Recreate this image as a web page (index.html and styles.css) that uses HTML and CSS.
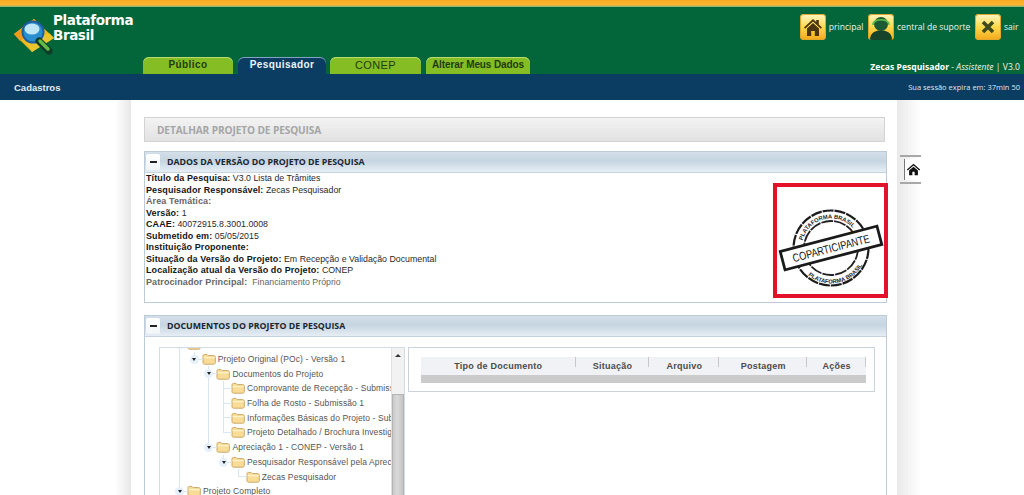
FILE: index.html
```html
<!DOCTYPE html>
<html lang="pt-BR">
<head>
<meta charset="utf-8">
<title>Plataforma Brasil</title>
<link rel="stylesheet" href="styles.css">
</head>
<body>
<svg class="defs" width="0" height="0" aria-hidden="true">
  <symbol id="folder" viewBox="0 0 14 12">
    <path d="M1 3.2C1 2 1.6 1.4 2.6 1.4H5L6.2 2.6H11.6C12.6 2.6 13.3 3.2 13.3 4.2V9.6C13.3 10.6 12.6 11.2 11.6 11.2H2.6C1.6 11.2 1 10.6 1 9.6Z" fill="#f9dd96" stroke="#c9a86a" stroke-width="1"/>
    <path d="M1.6 4.6H12.8" stroke="#fdf1c9" stroke-width="1.4"/>
  </symbol>
</svg>

<header class="masthead">
  <div class="stripe"></div>
  <div class="green">
    <div class="green-top">
      <a class="brand">
        <svg class="brand-mark" width="42" height="38" viewBox="0 0 42 38">
          <path d="M1 17 21 2 41 21 19 35Z" fill="#f4b81c"/>
          <path d="M1 17 21 2 26 7 7 24Z" fill="#f09a1e"/>
          <path d="M14 26 19 35 41 21 36 16Z" fill="#e9c62d"/>
          <circle cx="20" cy="15" r="10.5" fill="#2a8fd0" stroke="#1f5f9f" stroke-width="2"/>
          <ellipse cx="19" cy="12" rx="7.5" ry="5.5" fill="#bfe6f5"/>
          <path d="M26 24 36 34" stroke="#0d3d2a" stroke-width="7" stroke-linecap="round"/>
          <path d="M27 24 35 32" stroke="#63bb45" stroke-width="3.5" stroke-linecap="round"/>
        </svg>
        <span class="brand-name">Plataforma<br>Brasil</span>
      </a>
      <nav class="quick">
        <a class="quick-item">
          <span class="quick-icon">
            <svg width="20" height="20" viewBox="0 0 20 20"><path d="M1 10.5 10 2l3.2 3V3h2.6v4.5L19 10.5l-1.2 1.3L10 4.6 2.2 11.8Z" fill="#4a3412"/><path d="M4 11.5 10 6l6 5.500V19H11.800v-5H8.200v5H4Z" fill="#4a3412"/></svg>
          </span>principal</a>
        <a class="quick-item">
          <span class="quick-icon">
            <svg width="26" height="26" viewBox="0 0 26 26"><circle cx="13" cy="10" r="7" fill="#1c5a34"/><path d="M5 11C4.500 4 21.500 4 21 11" fill="none" stroke="#5fbf4a" stroke-width="1.600"/><path d="M2 26C2 18 8 16.500 13 16.500S24 18 24 26Z" fill="#17432a"/></svg>
          </span>central de suporte</a>
        <a class="quick-item">
          <span class="quick-icon">
            <svg width="14" height="14" viewBox="0 0 14 14"><path d="M2 2 12 12M12 2 2 12" stroke="#3f4a1c" stroke-width="3.600"/></svg>
          </span>sair</a>
      </nav>
    </div>
    <div class="green-bottom">
      <div class="tabs">
        <a class="tab tab-a">Público</a>
        <a class="tab tab-b is-active">Pesquisador</a>
        <a class="tab tab-c tab-light">CONEP</a>
        <a class="tab tab-d tab-small">Alterar Meus Dados</a>
      </div>
      <div class="user"><b>Zecas Pesquisador</b> - <i>Assistente</i> | V3.0</div>
    </div>
  </div>
  <div class="navy">
    <a class="menu-item">Cadastros</a>
    <span class="session">Sua sessão expira em: 37min 50</span>
  </div>
</header>

<div class="page">
  <div class="gutter-left"></div>
  <main class="sheet">
    <h1 class="page-title">DETALHAR PROJETO DE PESQUISA</h1>

    <section class="panel panel-data">
      <div class="panel-head"><span class="toggle-box"></span><h2>DADOS DA VERSÃO DO PROJETO DE PESQUISA</h2></div>
      <div class="data-body">
        <div class="facts">
          <div><b>Título da Pesquisa:</b> V3.0 Lista de Trâmites</div>
          <div><b>Pesquisador Responsável:</b> Zecas Pesquisador</div>
          <div class="muted"><b>Área Temática:</b></div>
          <div><b>Versão:</b> 1</div>
          <div><b>CAAE:</b> 40072915.8.3001.0008</div>
          <div><b>Submetido em:</b> 05/05/2015</div>
          <div><b>Instituição Proponente:</b></div>
          <div><b>Situação da Versão do Projeto:</b> Em Recepção e Validação Documental</div>
          <div><b>Localização atual da Versão do Projeto:</b> CONEP</div>
          <div class="muted"><b>Patrocinador Principal:</b>&nbsp; Financiamento Próprio</div>
        </div>
        <div class="stamp-frame">
          <svg width="107" height="107" viewBox="0 0 107 107">
            <defs>
              <path id="arc-top" d="M25.500 53.400A29.500 29.500 0 0 1 78.200 44.100"/>
              <path id="arc-bottom" d="M31.200 88.200A35.500 35.500 0 0 0 87.400 73.100"/>
            </defs>
            <circle cx="54" cy="61" r="37.500" fill="none" stroke="#1c1c1c" stroke-width="2.200" stroke-dasharray="11 1"/>
            <circle cx="54" cy="61" r="27" fill="none" stroke="#222" stroke-width="1.800" stroke-dasharray="12 1"/>
            <text class="stamp-ring"><textPath href="#arc-top">PLATAFORMA BRASIL</textPath></text>
            <text class="stamp-ring"><textPath href="#arc-bottom">PLATAFORMA BRASIL</textPath></text>
            <g transform="rotate(-14.700 54 61)">
              <rect x="4" y="51.500" width="100" height="19" fill="#fff" stroke="#1a1a1a" stroke-width="2.800"/>
              <text class="stamp-word" transform="translate(54 65.300) scale(.8 1)" text-anchor="middle">COPARTICIPANTE</text>
            </g>
          </svg>
        </div>
      </div>
    </section>

    <section class="panel panel-docs">
      <div class="panel-head"><span class="toggle-box"></span><h2>DOCUMENTOS DO PROJETO DE PESQUISA</h2></div>
      <div class="docs-body">
        <div class="tree">
          <div class="tree-view">
            <ul class="tree-root">
              <li class="branch">
                <div class="row"><span class="tg"></span><svg class="fd"><use href="#folder"/></svg></div>
                <ul>
                  <li class="branch">
                    <div class="row"><span class="tg"></span><svg class="fd"><use href="#folder"/></svg><span>Projeto Original (POc) - Versão 1</span></div>
                    <ul>
                      <li class="branch">
                        <div class="row"><span class="tg"></span><svg class="fd"><use href="#folder"/></svg><span>Documentos do Projeto</span></div>
                        <ul>
                          <li><div class="row"><svg class="fd"><use href="#folder"/></svg><span>Comprovante de Recepção - Submissão 1</span></div></li>
                          <li><div class="row"><svg class="fd"><use href="#folder"/></svg><span>Folha de Rosto - Submissão 1</span></div></li>
                          <li><div class="row"><svg class="fd"><use href="#folder"/></svg><span>Informações Básicas do Projeto - Submissão 1</span></div></li>
                          <li><div class="row"><svg class="fd"><use href="#folder"/></svg><span>Projeto Detalhado / Brochura Investigador</span></div></li>
                        </ul>
                      </li>
                      <li class="branch">
                        <div class="row"><span class="tg"></span><svg class="fd"><use href="#folder"/></svg><span>Apreciação 1 - CONEP - Versão 1</span></div>
                        <ul>
                          <li class="branch">
                            <div class="row"><span class="tg"></span><svg class="fd"><use href="#folder"/></svg><span>Pesquisador Responsável pela Apreciação</span></div>
                            <ul>
                              <li><div class="row"><svg class="fd"><use href="#folder"/></svg><span>Zecas Pesquisador</span></div></li>
                            </ul>
                          </li>
                        </ul>
                      </li>
                    </ul>
                  </li>
                </ul>
              </li>
              <li class="branch">
                <div class="row"><span class="tg"></span><svg class="fd"><use href="#folder"/></svg><span>Projeto Completo</span></div>
              </li>
            </ul>
          </div>
          <div class="scrollbar">
            <span class="arrow"></span>
            <span class="thumb"></span>
          </div>
        </div>
        <div class="doc-table">
          <div class="doc-head">
            <span class="c1">Tipo de Documento</span>
            <span class="c2">Situação</span>
            <span class="c3">Arquivo</span>
            <span class="c4">Postagem</span>
            <span class="c5">Ações</span>
          </div>
          <div class="doc-empty"></div>
        </div>
      </div>
    </section>
  </main>
  <aside class="gutter-right">
    <div class="side-tab">
      <span class="side-btn">
        <svg width="15" height="15" viewBox="0 0 17 17"><path d="M1 8.500 8.500 2 16 8.500l-1 1.200-6.500-5.600L2 9.700Z" fill="#111"/><path d="M3.500 9.500 8.500 5.300l5 4.200V15H9.800v-4H7.200v4H3.500Z" fill="#111"/></svg>
      </span>
    </div>
  </aside>
</div>
</body>
</html>
```

FILE: styles.css
```css
* { box-sizing: border-box; }
html, body { margin: 0; padding: 0; height: 495px; overflow: hidden; background: #fff; }
body { font-family: "Liberation Sans", Arial, sans-serif; }
ul { list-style: none; margin: 0; padding: 0; }
h1, h2 { margin: 0; }
.defs { display: block; height: 0; }

/* header */
.stripe { height: 7px; background: linear-gradient(#f7a823, #fdb52f 70%, #9db36a 90%, #8fb27a); }
.green { height: 67px; background: #03663a; display: flex; flex-direction: column; justify-content: space-between; }
.green-top { display: flex; justify-content: space-between; align-items: flex-start; padding: 7px 5.500px 0 13px; }
.brand { display: flex; align-items: flex-start; color: #fff; }
.brand-mark { display: block; margin-top: 3px; }
.brand-name { margin: -1px 0 0 -2px; font-family: "DejaVu Sans", sans-serif; font-weight: 700; font-size: 13.500px; line-height: 15px; letter-spacing: -.4px; }
.quick { display: flex; align-items: center; }
.quick-item { display: flex; align-items: center; gap: 2.500px; margin-left: 5px; font-family: "Open Sans", sans-serif; font-size: 8.600px; color: #e9f3ea; }
.quick-icon { width: 26px; height: 26px; border-radius: 4px; display: flex; align-items: center; justify-content: center; overflow: hidden; background: linear-gradient(#fff7c8, #fdd94a 50%, #f4a81c); box-shadow: inset 0 0 0 1px #e2a72a; }
.green-bottom { display: flex; justify-content: space-between; align-items: flex-end; padding: 0 4px 0 143px; }
.tabs { display: flex; }
.tab { height: 17px; border-radius: 6px 6px 0 0; background: #84be24; color: #1e3c10; font-weight: 700; font-size: 10px; letter-spacing: .4px; text-align: center; line-height: 16px; box-shadow: inset 0 1px 0 #b6dc70; }
.tab-a { width: 90px; margin-right: 5px; }
.tab-b { width: 88px; margin-right: 4px; }
.tab-c { width: 91px; margin-right: 5px; }
.tab-d { width: 104px; }
.tab-light { font-weight: 400; font-size: 11px; }
.tab-small { letter-spacing: -.1px; }
.is-active { background: #0b3c61; color: #eef3f6; box-shadow: inset 0 1px 0 #7fa6c0; }
.user { font-family: "Open Sans", sans-serif; font-size: 8.600px; color: #eef5ee; padding-bottom: 1px; }
.user b { color: #fff; }
.navy { height: 26px; background: #0b3c61; display: flex; justify-content: space-between; align-items: center; padding: 0 4px 0 14px; }
.menu-item { color: #e2edf4; font-size: 9.500px; font-weight: 700; }
.session { font-family: "Open Sans", sans-serif; font-size: 7.500px; color: #dfe9ef; }

/* page */
.page { display: flex; padding-left: 115px; height: 395px; overflow: hidden; }
.gutter-left { width: 16px; background: linear-gradient(90deg, #fff, #e7e7e7); }
.sheet { width: 766px; padding: 17px 9px 0 13px; background: #fff; }
.gutter-right { width: 24px; padding-top: 55px; background: linear-gradient(90deg, #e9e9e9, #fff); }

.page-title { height: 25px; width: 741px; padding-left: 12px; font-family: "Open Sans", sans-serif; font-size: 10.100px; font-weight: 700; line-height: 25px; color: #a4a6a6; background: linear-gradient(#f3f3f3, #e2e2e2); border: 1px solid #d3d3d3; letter-spacing: -.1px; }

.panel { width: 743px; border: 1px solid #bccbd8; }
.panel-data { margin-top: 9px; height: 152px; }
.panel-docs { margin-top: 12px; height: 201px; border-bottom: 0; }
.panel-head { height: 21px; display: flex; align-items: center; padding-bottom: 1px; background: linear-gradient(#d3dfe9, #c6d5e1 45%, #e6eef5); border-bottom: 1px solid #c7d3de; }
.panel-head h2 { font-family: "Open Sans", sans-serif; font-size: 8.800px; font-weight: 700; color: #1b2530; margin-left: 7px; }
.toggle-box { width: 14px; height: 16px; margin-left: 1px; background: linear-gradient(#fff, #f1f5f8); border-radius: 2px; display: flex; align-items: center; justify-content: center; }
.toggle-box::before { content: ""; width: 7px; height: 2px; background: #222; }

.data-body { display: flex; justify-content: space-between; }
.facts { padding: 0 0 0 1px; font-size: 8.800px; color: #2a2a2a; }
.facts div { height: 11.550px; line-height: 11.550px; }
.facts b { color: #161616; font-size: 9px; letter-spacing: .1px; }
.facts .muted, .facts .muted b { color: #666; }
.stamp-frame { width: 115px; height: 115px; margin: 10px -2px 0 0; border: 4px solid #e2122a; background: #fff; flex: none; }
.stamp-frame svg { display: block; }
.stamp-ring { font-size: 5.800px; font-weight: 700; fill: #1c1c1c; }
.stamp-word { font-size: 11.500px; fill: #111; }

.docs-body { display: flex; align-items: flex-start; padding: 10px 0 0 14px; }
.tree { width: 246px; height: 160px; border: 1px solid #d3dbe3; border-bottom: 0; display: flex; overflow: hidden; flex: none; }
.tree-view { width: 231px; overflow: hidden; font-size: 8.500px; color: #555; flex: none; }
.tree-root { margin: -11px 0 0 19px; }
.tree-root ul { padding-left: 14.700px; }
.tree li { position: relative; }
.tree li::before { content: ""; position: absolute; left: 0; top: 0; bottom: 0; width: 1px; background: #d8e5f2; }
.tree li:last-child::before { bottom: auto; height: 8px; }
.row { height: 14.700px; display: flex; align-items: center; padding-left: 8px; white-space: nowrap; position: relative; gap: 2px; letter-spacing: .1px; }
.row::before { content: ""; position: absolute; left: 0; top: 7px; width: 9px; height: 1px; background: #d8e5f2; }
.tg { position: absolute; left: -4px; top: 3px; width: 9px; height: 9px; border-radius: 50%; background: #e6f0fa; z-index: 1; display: flex; align-items: center; justify-content: center; }
.tg::before { content: ""; border: 2.500px solid transparent; border-top: 3.500px solid #222; border-bottom: 0; }
.fd { width: 14px; height: 12px; flex: none; }
.scrollbar { width: 13px; background: #f2f2f2; border-left: 1px solid #e2e2e2; display: flex; flex-direction: column; align-items: center; }
.arrow { margin-top: 6px; border: 3px solid transparent; border-top: 0; border-bottom: 3px solid #333; }
.thumb { margin-top: 37px; width: 12px; flex: 1; background: linear-gradient(90deg, #c8c8c8, #dadada 40%, #c4c4c4); border: 1px solid #b5b5b5; }

.doc-table { width: 467px; height: 45px; margin-left: 3px; padding: 9px 8px 0 12px; border: 1px solid #ccd3da; flex: none; }
.doc-head { display: flex; height: 18px; background: #f0f2f5; font-size: 9px; font-weight: 700; color: #4c4c4c; letter-spacing: .25px; line-height: 18px; text-align: center; }
.doc-head span { position: relative; }
.doc-head span::after { content: ""; position: absolute; right: 0; top: 0; width: 1px; height: 10px; background: #c8c8c8; }
.c1 { width: 155px; }
.c2 { width: 74px; }
.c3 { width: 70px; }
.c4 { width: 88px; }
.c5 { width: 59px; }
.doc-empty { height: 8px; background: #cbcbcb; }

.side-tab { height: 29px; margin-left: 3px; padding: 2px 0 2px 4px; border-top: 2px solid #a8a8a8; border-bottom: 2px solid #a8a8a8; }
.side-btn { display: flex; align-items: center; justify-content: center; height: 100%; width: 17px; background: #fff; border-left: 1px solid #777; }
```
